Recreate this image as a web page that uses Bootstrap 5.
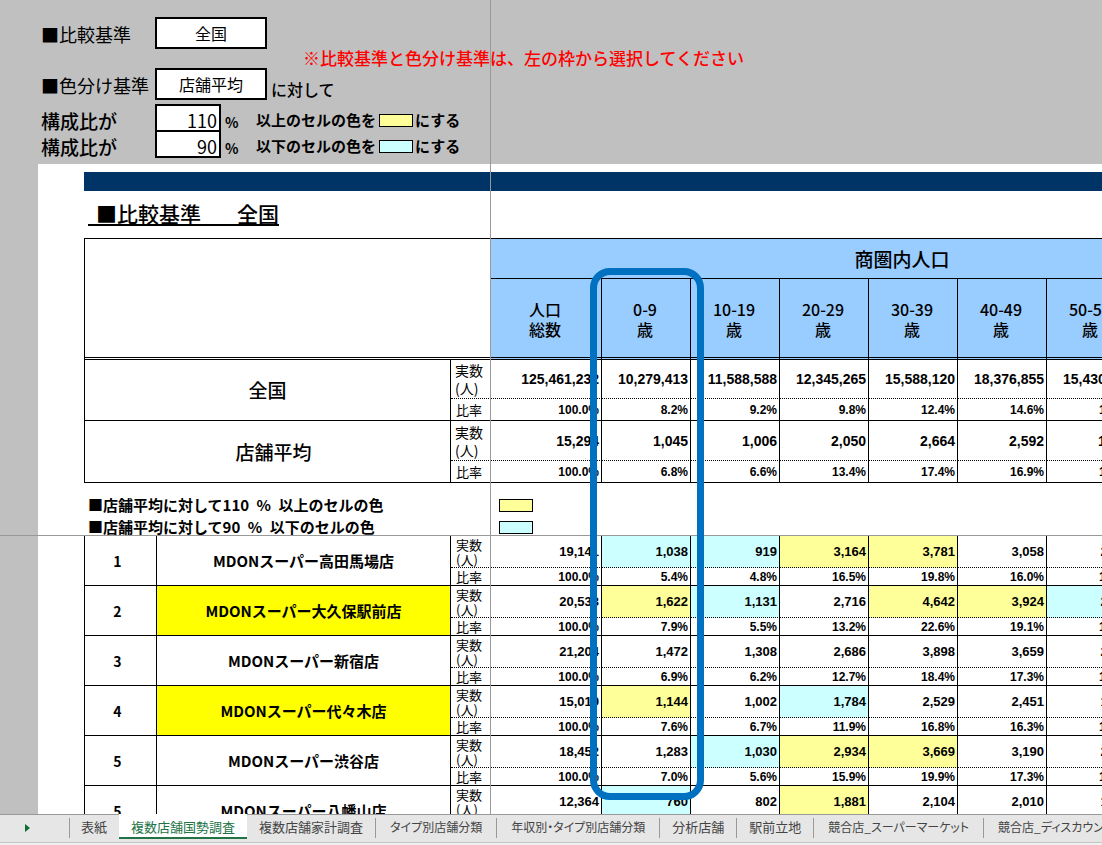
<!DOCTYPE html>
<html lang="ja">
<head>
<meta charset="utf-8">
<meta name="viewport" content="width=device-width, initial-scale=1">
<title>複数店舗国勢調査</title>
<link href="https://cdn.jsdelivr.net/npm/bootstrap@5.3.0/dist/css/bootstrap.min.css" rel="stylesheet">
<style>
  body { font-family: "Noto Sans CJK JP", "Liberation Sans", sans-serif; font-size: 15px; line-height: 20px; color: #000; background: #f0f0f0; }
  .workbook { background: #fff; }
  /* frozen-pane dividers */
  .workbook::after { content: ""; position: absolute; top: 0; bottom: 0; left: 490px; width: 1px; background: #999; z-index: 1; }
  .pane-scroll { border-top: 1px solid #999; }
  .margin-col { border-left: 38px solid silver; padding-left: 46px; }

  /* settings */
  .settings { background: silver; height: 164px; padding: 17px 0 0 41px; white-space: nowrap; }
  .line-base { height: 51px; }
  .line-color { height: 36px; }
  .line-rate { height: 26px; }
  .line-label { width: 114px; flex: none; font-size: 18px; font-weight: 400; line-height: 34px; }
  .line-rate .line-label { font-size: 19px; font-weight: 500; }
  .pick { width: 112px; height: 32px; border: 2px solid #000; background: #fff; color: #000; font-size: 16px; font-weight: 400; padding: 0; appearance: none; text-align: center; text-align-last: center; border-radius: 0; flex: none; }
  .rate { width: 66px; height: 28px; border: 2px solid #000; background: #fff; color: #000; font-size: 18px; padding: 4px 2px 0 0; text-align: right; border-radius: 0; flex: none; }
  .unit { width: 35px; padding-left: 4px; font-size: 14px; font-weight: 700; line-height: 36px; flex: none; }
  .rule-text { font-weight: 700; line-height: 32px; }
  .rule-text .chip { margin: 0 2px 0 3px; }
  .notice { color: #f00; font-size: 17px; font-weight: 500; margin-left: 36px; }
  .toward { font-size: 16px; font-weight: 500; line-height: 26px; height: 28px; margin-left: 4px; }
  .chip { display: inline-block; width: 34px; height: 13px; border: 1px solid #000; flex: none; }
  .high { background: #ff9; }
  .low { background: #cff; }

  .ribbon { height: 19px; background: #036; margin-top: 8px; }
  .base-title { display: inline-flex; gap: 36px; font-size: 21px; font-weight: 500; line-height: 20px; border-bottom: 2px solid #000; margin: 11px 0 12px 4px; padding: 1px 0 0 8px; height: 24px; }

  /* survey grids */
  .survey { table-layout: fixed; width: 1px; border-collapse: separate; border-spacing: 0; border-left: 1px solid #000; }
  .survey th, .survey td { padding: 0; border-right: 1px solid #000; border-bottom: 1px solid #000; overflow: hidden; }
  .survey-head { border-top: 1px solid #000; }
  .c-no { width: 72px; } .c-name { width: 294px; } .c-kind { width: 40px; } .c-total { width: 111px; } .c-age { width: 89px; }
  .survey th { text-align: center; font-weight: 700; }
  .survey .rank { font-size: 14px; padding-right: 6px; }
  .survey thead th { background: #9cf; font-size: 16px; font-weight: 500; line-height: 20px; border-bottom: 3px double #000; }
  .survey thead .blank { background: #fff; }
  .survey thead .group { height: 40px; font-size: 19px; border-bottom: 1px solid #000; }
  .survey thead .age { height: 81px; padding: 2px 2px 0 0; }
  .survey .area { font-size: 19px; font-weight: 500; }
  .survey .indent { padding-left: 12px; }
  .survey .kind { font-size: 13px; font-weight: 400; line-height: 15px; text-align: left; padding-left: 5px; }
  .survey .num { height: 32px; border-bottom: 1px dotted #000; }
  .survey .pct { height: 18px; }
  .survey td { font-family: "Liberation Sans", "Noto Sans CJK JP", sans-serif; font-weight: 700; text-align: right; padding-right: 2px; line-height: 16px; }
  .survey td.num { font-size: 13px; }
  .survey td.pct { font-size: 12px; }
  .survey-head .num { height: 40px; }
  .survey-head .first .num { height: 39px; }
  .survey-head .pct { height: 22px; }
  .survey-head td.num { font-size: 14px; }
  .survey-head th.num { font-size: 14px; line-height: 18px; padding-left: 4px; }
  .survey th.picked { background: #ff0; }

  .legend-line { height: 22px; margin-left: 4px; white-space: nowrap; font-weight: 700; line-height: 22px; }
  .legend-line span { width: 411px; flex: none; }
  .legends { padding-top: 11px; height: 52px; }

  .spotlight { position: absolute; left: 590px; top: 268px; width: 114px; height: 532px; border: 7px solid #0070c0; border-radius: 20px; z-index: 2; pointer-events: none; }

  /* sheet tabs */
  .tabs-bar { height: 29px; background: #e6e6e6; border-bottom: 1px solid #c6c6c6; margin-bottom: 2px; font-size: 13px; overflow: hidden; }
  .tabs-nav { width: 69px; padding-left: 25px; border-top: 1px solid #999; flex: none; }
  .tabs-nav button { border: 0; padding: 0; background: none; line-height: 0; display: block; margin-top: 9px; }
  .sheet { color: #444; text-decoration: none; white-space: nowrap; font-feature-settings: "palt"; border-top: 1px solid #999; flex: none; padding: 3px 0 5px; }
  .sheet span { display: block; height: 20px; line-height: 18px; padding: 0 12px; border-right: 1px solid #999; }
  .sheet.kana span { font-size: 12px; padding: 0 14px; }
  .sheet.first span { border-left: 1px solid #999; padding: 0 12px 0 11px; }
  .sheet.current { background: #fff; color: #217346; border-top: 0; border-bottom: 2px solid #217346; height: 25px; padding-top: 4px; }
  .sheet.current span, .sheet.first span { border-right: 0; }
</style>
</head>
<body class="vh-100 d-flex flex-column overflow-hidden">
<main class="workbook position-relative flex-grow-1 d-flex flex-column overflow-hidden">
  <section class="pane-frozen flex-shrink-0">
    <form class="settings">
      <div class="line-base d-flex align-items-start">
        <label class="line-label" for="base">■比較基準</label>
        <select class="pick" id="base"><option>全国</option></select>
        <span class="notice align-self-end">※比較基準と色分け基準は、左の枠から選択してください</span>
      </div>
      <div class="line-color d-flex align-items-start">
        <label class="line-label" for="paint">■色分け基準</label>
        <select class="pick" id="paint"><option>店舗平均</option></select>
        <span class="toward align-self-end">に対して</span>
      </div>
      <div class="line-rate d-flex align-items-start">
        <label class="line-label" for="upper">構成比が</label>
        <input class="rate" id="upper" type="text" inputmode="numeric" value="110">
        <span class="unit">%</span>
        <span class="rule-text d-flex align-items-center">以上のセルの色を<i class="chip high"></i>にする</span>
      </div>
      <div class="line-rate d-flex align-items-start">
        <label class="line-label" for="lower">構成比が</label>
        <input class="rate" id="lower" type="text" inputmode="numeric" value="90">
        <span class="unit">%</span>
        <span class="rule-text d-flex align-items-center">以下のセルの色を<i class="chip low"></i>にする</span>
      </div>
    </form>
    <div class="margin-col overflow-hidden">
      <div class="ribbon"></div>
      <h1 class="base-title"><span>■比較基準</span><span>全国</span></h1>
      <table class="survey survey-head">
        <colgroup><col class="c-no"><col class="c-name"><col class="c-kind"><col class="c-total"><col class="c-age" span="8"></colgroup>
        <thead>
          <tr><th class="blank" colspan="3" rowspan="2"></th><th class="group" colspan="9">商圏内人口</th></tr>
          <tr><th class="age">人口<br>総数</th><th class="age">0-9<br>歳</th><th class="age">10-19<br>歳</th><th class="age">20-29<br>歳</th><th class="age">30-39<br>歳</th><th class="age">40-49<br>歳</th><th class="age">50-59<br>歳</th><th class="age"></th><th class="age"></th></tr>
        </thead>
        <tbody>
          <tr class="first"><th class="area" colspan="2" rowspan="2">全国</th><th class="kind num">実数<br>(人)</th><td class="num">125,461,232</td><td class="num">10,279,413</td><td class="num">11,588,588</td><td class="num">12,345,265</td><td class="num">15,588,120</td><td class="num">18,376,855</td><td class="num">15,430,417</td></tr>
          <tr><th class="kind pct">比率</th><td class="pct">100.0%</td><td class="pct">8.2%</td><td class="pct">9.2%</td><td class="pct">9.8%</td><td class="pct">12.4%</td><td class="pct">14.6%</td><td class="pct">12.3%</td></tr>
          <tr><th class="area indent" colspan="2" rowspan="2">店舗平均</th><th class="kind num">実数<br>(人)</th><td class="num">15,294</td><td class="num">1,045</td><td class="num">1,006</td><td class="num">2,050</td><td class="num">2,664</td><td class="num">2,592</td><td class="num">1,927</td></tr>
          <tr><th class="kind pct">比率</th><td class="pct">100.0%</td><td class="pct">6.8%</td><td class="pct">6.6%</td><td class="pct">13.4%</td><td class="pct">17.4%</td><td class="pct">16.9%</td><td class="pct">12.6%</td></tr>
        </tbody>
      </table>
      <div class="legends">
        <div class="legend-line d-flex align-items-center"><span>■店舗平均に対して110&ensp;%&ensp;以上のセルの色</span><i class="chip high"></i></div>
        <div class="legend-line d-flex align-items-center"><span>■店舗平均に対して90&ensp;%&ensp;以下のセルの色</span><i class="chip low"></i></div>
      </div>
    </div>
  </section>

  <section class="pane-scroll flex-grow-1 overflow-hidden">
    <div class="margin-col overflow-hidden">
      <table class="survey survey-shops">
        <colgroup><col class="c-no"><col class="c-name"><col class="c-kind"><col class="c-total"><col class="c-age" span="6"></colgroup>
        <tbody>
          <tr><th class="rank" rowspan="2">1</th><th rowspan="2">MDONスーパー高田馬場店</th><th class="kind num">実数<br>(人)</th><td class="num">19,141</td><td class="num low">1,038</td><td class="num low">919</td><td class="num high">3,164</td><td class="num high">3,781</td><td class="num">3,058</td><td class="num">2,412</td></tr>
          <tr><th class="kind pct">比率</th><td class="pct">100.0%</td><td class="pct">5.4%</td><td class="pct">4.8%</td><td class="pct">16.5%</td><td class="pct">19.8%</td><td class="pct">16.0%</td><td class="pct">12.6%</td></tr>
          <tr><th class="rank" rowspan="2">2</th><th class="picked" rowspan="2">MDONスーパー大久保駅前店</th><th class="kind num">実数<br>(人)</th><td class="num">20,533</td><td class="num high">1,622</td><td class="num low">1,131</td><td class="num">2,716</td><td class="num high">4,642</td><td class="num high">3,924</td><td class="num low">2,238</td></tr>
          <tr><th class="kind pct">比率</th><td class="pct">100.0%</td><td class="pct">7.9%</td><td class="pct">5.5%</td><td class="pct">13.2%</td><td class="pct">22.6%</td><td class="pct">19.1%</td><td class="pct">10.9%</td></tr>
          <tr><th class="rank" rowspan="2">3</th><th rowspan="2">MDONスーパー新宿店</th><th class="kind num">実数<br>(人)</th><td class="num">21,204</td><td class="num">1,472</td><td class="num">1,308</td><td class="num">2,686</td><td class="num">3,898</td><td class="num">3,659</td><td class="num">2,672</td></tr>
          <tr><th class="kind pct">比率</th><td class="pct">100.0%</td><td class="pct">6.9%</td><td class="pct">6.2%</td><td class="pct">12.7%</td><td class="pct">18.4%</td><td class="pct">17.3%</td><td class="pct">12.6%</td></tr>
          <tr><th class="rank" rowspan="2">4</th><th class="picked" rowspan="2">MDONスーパー代々木店</th><th class="kind num">実数<br>(人)</th><td class="num">15,019</td><td class="num high">1,144</td><td class="num">1,002</td><td class="num low">1,784</td><td class="num">2,529</td><td class="num">2,451</td><td class="num">1,892</td></tr>
          <tr><th class="kind pct">比率</th><td class="pct">100.0%</td><td class="pct">7.6%</td><td class="pct">6.7%</td><td class="pct">11.9%</td><td class="pct">16.8%</td><td class="pct">16.3%</td><td class="pct">12.6%</td></tr>
          <tr><th class="rank" rowspan="2">5</th><th rowspan="2">MDONスーパー渋谷店</th><th class="kind num">実数<br>(人)</th><td class="num">18,452</td><td class="num">1,283</td><td class="num low">1,030</td><td class="num high">2,934</td><td class="num high">3,669</td><td class="num">3,190</td><td class="num">2,325</td></tr>
          <tr><th class="kind pct">比率</th><td class="pct">100.0%</td><td class="pct">7.0%</td><td class="pct">5.6%</td><td class="pct">15.9%</td><td class="pct">19.9%</td><td class="pct">17.3%</td><td class="pct">12.6%</td></tr>
          <tr><th class="rank" rowspan="2">5</th><th rowspan="2">MDONスーパー八幡山店</th><th class="kind num">実数<br>(人)</th><td class="num">12,364</td><td class="num low">760</td><td class="num">802</td><td class="num high">1,881</td><td class="num">2,104</td><td class="num">2,010</td><td class="num">1,558</td></tr>
          <tr><th class="kind pct"></th><td class="pct"></td><td class="pct"></td><td class="pct"></td><td class="pct"></td><td class="pct"></td><td class="pct"></td></tr>
        </tbody>
      </table>
    </div>
  </section>
  <div class="spotlight"></div>
</main>

<nav class="tabs-bar d-flex flex-shrink-0" aria-label="シート">
  <div class="tabs-nav"><button type="button" aria-label="次のシート"><svg width="5" height="8" viewBox="0 0 5 8"><path d="M0 0 5 4 0 8z" fill="#0f6b38"/></svg></button></div>
  <a class="sheet first" href="#"><span>表紙</span></a>
  <a class="sheet current" href="#" aria-current="page"><span>複数店舗国勢調査</span></a>
  <a class="sheet" href="#"><span>複数店舗家計調査</span></a>
  <a class="sheet kana" href="#"><span>タイプ別店舗分類</span></a>
  <a class="sheet kana" href="#"><span>年収別・タイプ別店舗分類</span></a>
  <a class="sheet" href="#"><span>分析店舗</span></a>
  <a class="sheet" href="#"><span>駅前立地</span></a>
  <a class="sheet kana" href="#"><span>競合店_スーパーマーケット</span></a>
  <a class="sheet kana" href="#"><span>競合店_ディスカウント</span></a>
</nav>
<script src="https://cdn.jsdelivr.net/npm/bootstrap@5.3.0/dist/js/bootstrap.bundle.min.js"></script>
</body>
</html>
